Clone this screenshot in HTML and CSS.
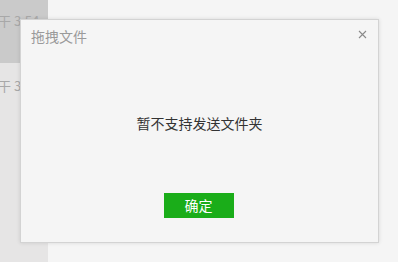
FILE: index.html
```html
<!DOCTYPE html>
<html lang="zh">
<head>
<meta charset="utf-8">
<link rel="stylesheet" href="styles.css">
</head>
<body>
<div class="app">
  <aside class="sidebar">
    <div class="item selected"><span class="meta">干 3:54</span></div>
    <div class="item"><span class="meta">干 3:54</span></div>
  </aside>
  <main class="content"></main>
</div>
<div class="dialog">
  <div class="dialog-head">
    <span class="dialog-title">拖拽文件</span>
    <span class="dialog-close">
      <svg width="9" height="9" viewBox="0 0 9 9"><path d="M1 1L8 8M8 1L1 8" stroke="#8a8a8a" stroke-width="1.1" fill="none"/></svg>
    </span>
  </div>
  <div class="dialog-body">暂不支持发送文件夹</div>
  <div class="dialog-foot"><button class="btn-ok">确定</button></div>
</div>
</body>
</html>
```
FILE: styles.css
```css
html, body { margin: 0; padding: 0; }
body {
  width: 398px; height: 262px; overflow: hidden; position: relative;
  font-family: "Noto Sans CJK SC", "Noto Sans", sans-serif;
  background: #f5f5f5;
}
.app { display: flex; height: 262px; }
.sidebar { width: 48px; background: #e6e5e5; display: flex; flex-direction: column; overflow: hidden; }
.item { height: 64px; display: flex; align-items: flex-start; padding-top: 13px; box-sizing: border-box; }
.item.selected { background: #cacaca; height: 63px; }
.meta { font-size: 13px; color: #a8a8a8; margin-left: -2px; white-space: nowrap; line-height: 16px; }
.item + .item { padding-top: 15px; }
.content { flex: 1; background: #f5f5f5; }
.dialog {
  position: absolute; left: 20px; top: 19px; width: 357px; height: 222px;
  background: #f5f5f5; border: 1px solid #d3d3d3;
  box-shadow: 0 0 4px rgba(0,0,0,0.12);
  display: flex; flex-direction: column;
}
.dialog-head { display: flex; justify-content: space-between; align-items: flex-start; height: 60px; padding: 7px 11px 0 10px; box-sizing: border-box; }
.dialog-title { font-size: 14px; color: #9a9a9a; line-height: 18px; }
.dialog-close { display: flex; padding-top: 3px; }
.dialog-body { text-align: center; font-size: 14px; color: #333; line-height: 20px; margin-top: 33px; height: 20px; }
.dialog-foot { display: flex; justify-content: center; margin-top: 60px; }
.btn-ok {
  width: 70px; height: 25px; border: none; background: #1aad19; color: #fff;
  font-family: inherit; font-size: 14px; padding: 0; line-height: 25px; margin-left: -2px;
}
```
